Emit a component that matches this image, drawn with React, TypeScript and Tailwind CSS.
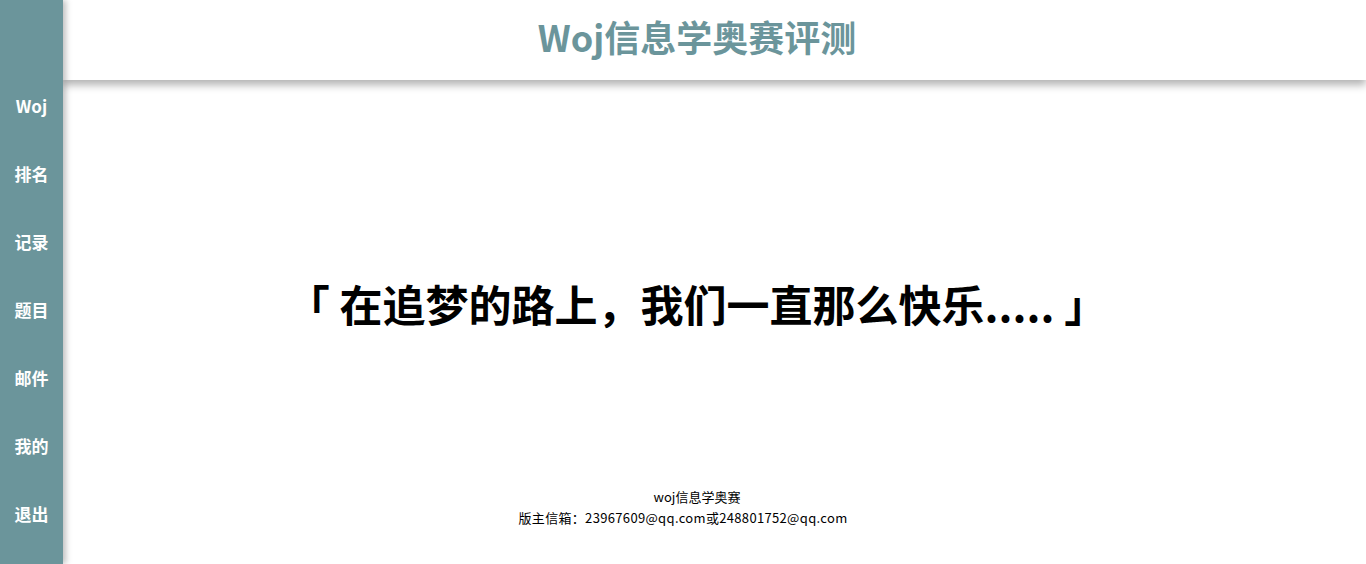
const cjk = { fontFamily: '"Noto Sans CJK SC", "Noto Sans", sans-serif' }

const navItems = ['Woj', '排名', '记录', '题目', '邮件', '我的', '退出']

export default function App() {
  return (
    <div className="relative flex h-[564px] w-full overflow-hidden bg-white" style={cjk}>
      <nav className="relative z-20 flex h-full w-[63px] shrink-0 flex-col bg-[#6b959b] pt-[72px] shadow-[3px_0_6px_rgba(0,0,0,0.25)]">
        {navItems.map((item) => (
          <a
            key={item}
            href="#"
            className="flex h-[68px] items-center justify-center text-[17px] font-bold text-white"
          >
            {item}
          </a>
        ))}
      </nav>

      <div className="flex min-w-0 flex-1 flex-col">
        <header className="relative z-10 flex h-[80px] shrink-0 items-center justify-center bg-white pb-[8px] shadow-[0_5px_8px_rgba(0,0,0,0.3)]">
          <h1 className="-ml-[35px] text-[36px] font-bold text-[#6b959b]">Woj信息学奥赛评测</h1>
        </header>

        <main className="flex flex-1 flex-col items-center">
          <p className="mt-[202px] -ml-[35px] text-[43px] font-bold leading-none text-black">
            「 在追梦的路上，我们一直那么快乐..... 」
          </p>

          <footer className="mt-auto mb-[36px] -ml-[63px] flex flex-col items-center text-[13px] leading-[21px] text-black">
            <span className="pl-[28px]">woj信息学奥赛</span>
            <span className="tracking-[0.33px]">版主信箱：23967609@qq.com或248801752@qq.com</span>
          </footer>
        </main>
      </div>
    </div>
  )
}
